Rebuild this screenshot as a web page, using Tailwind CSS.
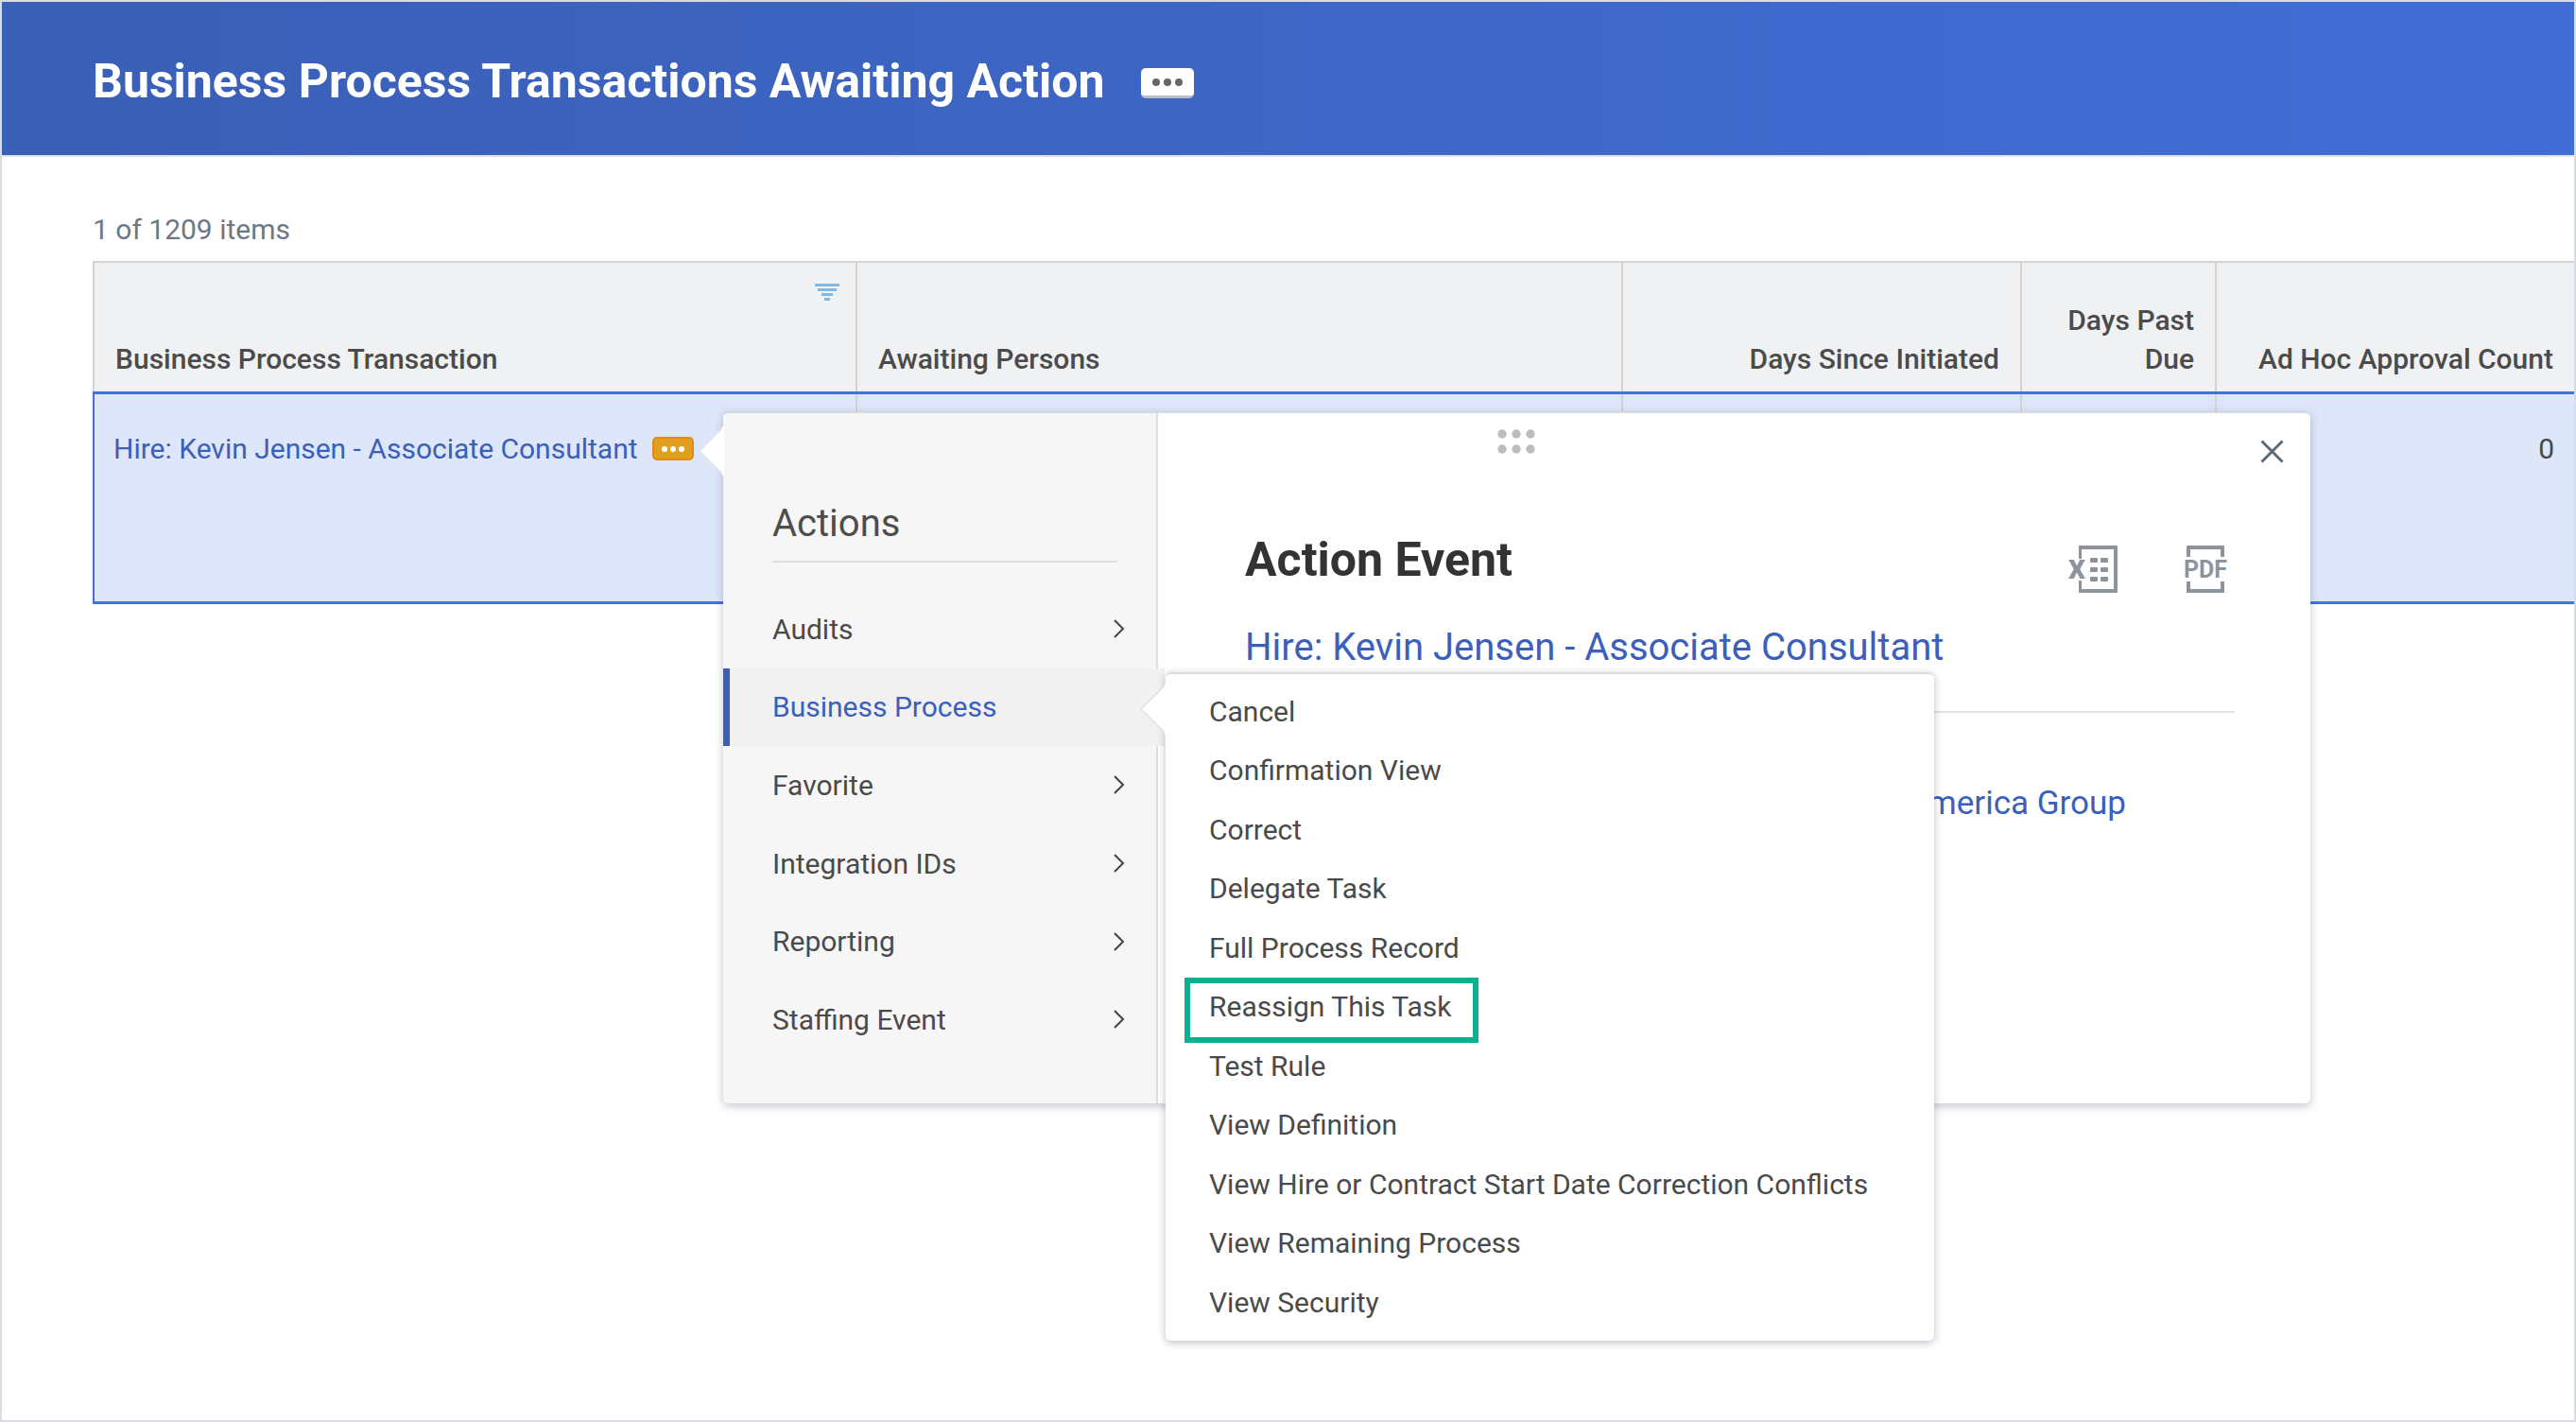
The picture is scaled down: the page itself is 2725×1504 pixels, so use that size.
<!DOCTYPE html>
<html lang="en">
  <head>
    <meta charset="UTF-8" />
    <title>Business Process Transactions Awaiting Action</title>
    <script src="https://cdn.jsdelivr.net/npm/@tailwindcss/browser@4"></script>
  </head>
  <body class="bg-white font-['Roboto',sans-serif] text-[#494949]">
    <div class="relative w-[2725px] h-[1504px] overflow-hidden border-2 border-[#d9dce2]">
      <!-- page header -->
      <header class="h-[162px] pt-[6px] flex items-center pl-[96px] bg-gradient-to-r from-[#3a5fb6] to-[#416dd6]">
        <h1 class="text-[50px] font-bold text-white leading-none">Business Process Transactions Awaiting Action</h1>
        <span class="ml-[38px] mt-[4px] w-[56px] h-[32px] rounded-[5px] bg-white border-b-[3px] border-[#bdbdbd] flex items-center justify-center gap-[4px]">
          <i class="w-[8px] h-[8px] rounded-full bg-[#666]"></i>
          <i class="w-[8px] h-[8px] rounded-full bg-[#666]"></i>
          <i class="w-[8px] h-[8px] rounded-full bg-[#666]"></i>
        </span>
      </header>
      <div class="h-[2px] bg-[#dfe1e6]"></div>

      <main class="pl-[96px]">
        <p class="h-[110px] pt-[59px] text-[30px] leading-[36px] text-[#6d7885]">1 of 1209 items</p>

        <!-- grid header -->
        <div class="grid grid-cols-[807px_810px_422px_206px_1fr] h-[138px] bg-[#f0f1f3] border-t-2 border-l-2 border-[#d3d3d3] text-[30px] font-medium leading-[41px] text-[#4b4b4b]">
          <div class="relative flex items-end pl-[22px] pb-[14px] border-r-2 border-[#d3d3d3]">
            Business Process Transaction
            <svg class="absolute right-[17px] top-[22px]" width="26" height="19" viewBox="0 0 26 19" fill="#80b9e1">
              <rect x="0" y="0" width="26" height="3" />
              <rect x="3" y="5" width="20" height="3" />
              <rect x="7" y="10" width="12" height="3" />
              <rect x="10" y="15" width="6" height="3" />
            </svg>
          </div>
          <div class="flex items-end pl-[22px] pb-[14px] border-r-2 border-[#d3d3d3]">Awaiting Persons</div>
          <div class="flex items-end justify-end pr-[22px] pb-[14px] border-r-2 border-[#d3d3d3]">Days Since Initiated</div>
          <div class="flex items-end justify-end text-right pr-[22px] pb-[14px] border-r-2 border-[#d3d3d3]">Days Past<br />Due</div>
          <div class="flex items-end justify-end pr-[22px] pb-[14px] whitespace-nowrap">Ad Hoc Approval Count</div>
        </div>

        <!-- selected row -->
        <div class="grid grid-cols-[807px_810px_422px_206px_1fr] h-[225px] bg-[#dde7f9] border-y-[3px] border-l-2 border-[#4472d8] text-[30px]">
          <div class="flex pl-[20px] pt-[40px] border-r-2 border-[#d3d3d3]">
            <a class="text-[#3b5fba] whitespace-nowrap leading-[36px]">Hire: Kevin Jensen - Associate Consultant</a>
            <span class="ml-[15px] mt-[5px] w-[44px] h-[25px] rounded-[5px] bg-[#e0a01e] border-2 border-[#de8a1d] flex items-center justify-center gap-[3px]">
              <i class="w-[6px] h-[6px] rounded-full bg-white"></i>
              <i class="w-[6px] h-[6px] rounded-full bg-white"></i>
              <i class="w-[6px] h-[6px] rounded-full bg-white"></i>
            </span>
          </div>
          <div class="border-r-2 border-[#d3d3d3]"></div>
          <div class="border-r-2 border-[#d3d3d3]"></div>
          <div class="border-r-2 border-[#d3d3d3]"></div>
          <div class="text-right pr-[21px] pt-[40px] leading-[36px]">0</div>
        </div>
      </main>

      <!-- action popup -->
      <div class="absolute left-[763px] top-[433px] w-[1679px] h-[732px] flex bg-white rounded-[6px] border-t-2 border-[#d5d9e0] shadow-[0_3px_10px_rgba(60,70,90,0.3)]">
        <svg class="absolute left-[-26px] top-[14px]" width="27" height="52" viewBox="0 0 27 52">
          <path d="M26 1 L1 26 L26 51 Z" fill="#fff" stroke="#e3e5e9" stroke-width="1.5" />
          <rect x="25" y="0" width="2" height="52" fill="#fff" />
        </svg>

        <!-- actions sidebar -->
        <aside class="w-[460px] shrink-0 bg-[#f6f6f6] border-r-2 border-[#dcdee2] rounded-l-[6px] pt-[94px] text-[30px] text-[#4a4a4a]">
          <div class="ml-[52px] w-[365px] h-[64px] border-b-2 border-[#dcdee2] text-[40px] leading-[46px] text-[#4d4d4d]">Actions</div>
          <ul class="mt-[29px]">
            <li class="h-[82.6px] flex items-center justify-between pl-[52px] pr-[32px]">Audits
              <svg width="14" height="22" viewBox="0 0 14 22" fill="none" stroke="#444" stroke-width="2"><path d="M2 2 L11 11 L2 20" /></svg>
            </li>
            <li class="h-[82.6px] flex items-center pl-[45px] w-[467px] bg-[#f1f1f2] border-l-[7px] border-[#3a5fb6] text-[#3b5fba]">Business Process</li>
            <li class="h-[82.6px] flex items-center justify-between pl-[52px] pr-[32px]">Favorite
              <svg width="14" height="22" viewBox="0 0 14 22" fill="none" stroke="#444" stroke-width="2"><path d="M2 2 L11 11 L2 20" /></svg>
            </li>
            <li class="h-[82.6px] flex items-center justify-between pl-[52px] pr-[32px]">Integration IDs
              <svg width="14" height="22" viewBox="0 0 14 22" fill="none" stroke="#444" stroke-width="2"><path d="M2 2 L11 11 L2 20" /></svg>
            </li>
            <li class="h-[82.6px] flex items-center justify-between pl-[52px] pr-[32px]">Reporting
              <svg width="14" height="22" viewBox="0 0 14 22" fill="none" stroke="#444" stroke-width="2"><path d="M2 2 L11 11 L2 20" /></svg>
            </li>
            <li class="h-[82.6px] flex items-center justify-between pl-[52px] pr-[32px]">Staffing Event
              <svg width="14" height="22" viewBox="0 0 14 22" fill="none" stroke="#444" stroke-width="2"><path d="M2 2 L11 11 L2 20" /></svg>
            </li>
          </ul>
        </aside>

        <!-- action event panel -->
        <section class="relative flex-1 pl-[92px] pr-[80px] pt-[126px]">
          <svg class="absolute left-[359px] top-[17px]" width="40" height="26" viewBox="0 0 40 26" fill="#bdbdbd">
            <circle cx="5" cy="5" r="4.7" /><circle cx="20" cy="5" r="4.7" /><circle cx="35" cy="5" r="4.7" />
            <circle cx="5" cy="21" r="4.7" /><circle cx="20" cy="21" r="4.7" /><circle cx="35" cy="21" r="4.7" />
          </svg>
          <svg class="absolute right-[28px] top-[28px]" width="25" height="25" viewBox="0 0 25 25" fill="none" stroke="#5e6a75" stroke-width="3"><path d="M1.5 1.5 L23.5 23.5 M23.5 1.5 L1.5 23.5" /></svg>

          <div class="flex items-start justify-between">
            <h2 class="text-[50px] font-bold leading-[58px] text-[#333]">Action Event</h2>
            <div class="flex gap-[69px] mr-[7px] mt-[14px]">
              <svg width="52" height="50" viewBox="0 0 52 50" fill="#8e939b">
                <path d="M11 14 V0 H52 V50 H11 V37 H14 V46 H48 V4 H14 V14 Z" />
                <rect x="23" y="13" width="8" height="5" rx="1" /><rect x="34" y="13" width="8" height="5" rx="1" />
                <rect x="23" y="23" width="8" height="5" rx="1" /><rect x="34" y="23" width="8" height="5" rx="1" />
                <rect x="23" y="33" width="8" height="5" rx="1" /><rect x="34" y="33" width="8" height="5" rx="1" />
                <text x="0" y="35" font-family="Roboto" font-weight="900" font-size="28">X</text>
              </svg>
              <svg width="48" height="50" viewBox="0 0 48 50" fill="#8e939b">
                <path d="M4 12 V0 H44 V12 H40 V4 H8 V12 Z" />
                <path d="M4 38 V50 H44 V38 H40 V46 H8 V38 Z" />
                <text x="1" y="34" font-family="Roboto" font-weight="700" font-size="26" textLength="46" lengthAdjust="spacingAndGlyphs">PDF</text>
              </svg>
            </div>
          </div>
          <a class="block mt-[33px] text-[40px] leading-[50px] text-[#3b5fba] whitespace-nowrap">Hire: Kevin Jensen - Associate Consultant</a>
          <div class="mt-[42px] border-t-2 border-[#dfe1e4]"></div>
          <p class="mt-[74px] pr-[115px] text-right text-[35px] leading-[44px] text-[#3b5fba]">America Group</p>
        </section>

        <!-- business process submenu -->
        <div class="absolute left-[468px] top-[274px] w-[813px] pt-[8px] pb-[9px] bg-white rounded-[6px] border-t-2 border-[#d9dce2] shadow-[0_2px_8px_rgba(60,70,90,0.35)] text-[30px] text-[#4a4a4a]">
          <svg class="absolute left-[-27px] top-[10px]" width="28" height="54" viewBox="0 0 28 54">
            <path d="M27 1 L1 27 L27 53 Z" fill="#fff" stroke="#dfe1e6" stroke-width="1.5" />
            <rect x="26" y="0" width="2" height="54" fill="#fff" />
          </svg>
          <ul>
            <li class="h-[62.5px] flex items-center pl-[46px]">Cancel</li>
            <li class="h-[62.5px] flex items-center pl-[46px]">Confirmation View</li>
            <li class="h-[62.5px] flex items-center pl-[46px]">Correct</li>
            <li class="h-[62.5px] flex items-center pl-[46px]">Delegate Task</li>
            <li class="h-[62.5px] flex items-center pl-[46px]">Full Process Record</li>
            <li class="relative h-[62.5px] flex items-center pl-[46px]">Reassign This Task
              <span class="absolute left-[20px] top-[0px] w-[311px] h-[69px] border-[6px] border-[#0bb08e]"></span>
            </li>
            <li class="h-[62.5px] flex items-center pl-[46px]">Test Rule</li>
            <li class="h-[62.5px] flex items-center pl-[46px]">View Definition</li>
            <li class="h-[62.5px] flex items-center pl-[46px]">View Hire or Contract Start Date Correction Conflicts</li>
            <li class="h-[62.5px] flex items-center pl-[46px]">View Remaining Process</li>
            <li class="h-[62.5px] flex items-center pl-[46px]">View Security</li>
          </ul>
        </div>
      </div>
    </div>
  </body>
</html>
